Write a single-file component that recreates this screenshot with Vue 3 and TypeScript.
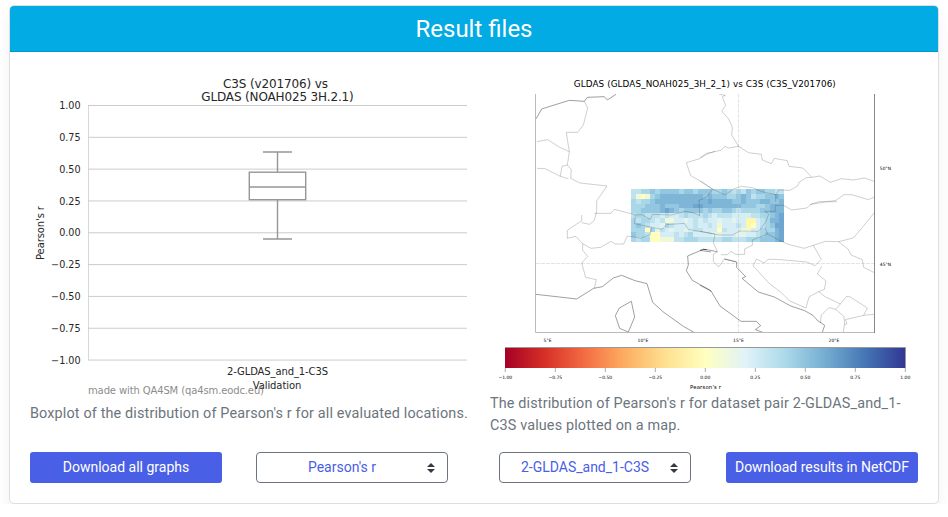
<script setup lang="ts">
const yTicks = ['1.00', '0.75', '0.50', '0.25', '0.00', '−0.25', '−0.50', '−0.75', '−1.00'].map(
  (label, i) => ({ label, y: 105.5 + i * 31.82 })
)

const barTicks = ['−1.00', '−0.75', '−0.50', '−0.25', '0.00', '0.25', '0.50', '0.75', '1.00'].map(
  (label, i) => ({ label, x: 505.3 + i * 50 })
)

const lonTicks = [
  { label: '5°E', x: 547.5 },
  { label: '10°E', x: 643 },
  { label: '15°E', x: 738.5 },
  { label: '20°E', x: 834 }
]

const stops = ['#a50026', '#d73027', '#f46d43', '#fdae61', '#fee090', '#ffffbf', '#e0f3f8', '#abd9e9', '#74add1', '#4575b4', '#313695']

const palette: Record<string, string> = {
  a: '#6ea6cf', b: '#7fb6d7', c: '#93c6e0', d: '#a9d7e8', e: '#c0e2ee',
  f: '#d5edf4', g: '#e3f3ee', h: '#f0f8d8', y: '#ffffbf', z: '#fff7a8'
}

const rows = [
  'eeddcdccccdccdcccddcdedecdccddee',
  'ehyhdcbbbbbbbbbcbcccddcbceddccbc',
  'deddcbbbbbbbbbbbabbbbccbcccbbccb',
  'dddcccbcccbbbaabbbbbbbbcccddcbbb',
  'ddccccbabcdccccdcddccdeddddccbbb',
  'eddeeefeffedeeedefeeeffffeeddcba',
  'deddefehhffgfefeffgffgffzzfedbba',
  'dcdeffgdeffffeffefhfffefzyfedcaa',
  'dddydgefgffgfeefffyefffhhffdddba',
  'cddeyyfffefedffffggfffggffedccba',
  'deddyyhhheedddeeeeeddeeedddcccba'
]
const cell = 4.79
const cells = rows.flatMap((row, j) =>
  [...row].map((k, i) => ({ x: 631 + i * cell, y: 189.2 + j * cell, fill: palette[k] }))
)
</script>

<template>
  <section class="card">
    <header class="card-header">Result files</header>
    <div class="card-body">
      <div class="figures">
        <figure class="fig-left">
          <svg width="440" height="327" viewBox="30 72 440 327" class="plot">
            <g fill="#262626" font-size="12" text-anchor="middle">
              <text x="275.5" y="88" textLength="105">C3S (v201706) vs</text>
              <text x="277.5" y="100.5" textLength="152.500">GLDAS (NOAH025 3H.2.1)</text>
            </g>
            <path d="M88.500 105v255" stroke="#d8d8d8" />
            <g v-for="t in yTicks" :key="t.label">
              <path :d="`M88 ${t.y}H467`" stroke="#ccc" />
              <text x="80.500" :y="t.y + 3.7" text-anchor="end" font-size="9.600" fill="#262626">{{ t.label }}</text>
            </g>
            <g fill="none" stroke="#969696" stroke-width="1.400">
              <path d="M277.500 172V152M277.500 199.500V239M263 152H292M263 239H292M249.300 187H305.700" />
              <rect x="249.300" y="172.200" width="56.400" height="27.500" />
            </g>
            <text transform="translate(44 233) rotate(-90)" text-anchor="middle" font-size="10" textLength="54" fill="#262626">Pearson's r</text>
            <text x="88" y="393.500" font-size="10" textLength="176" fill="#8c8c8c">made with QA4SM (qa4sm.eodc.eu)</text>
            <g font-size="10" text-anchor="middle" fill="#262626">
              <text x="277.500" y="374.500" textLength="101">2-GLDAS_and_1-C3S</text>
              <text x="277" y="388.700" textLength="48.500">Validation</text>
            </g>
          </svg>
          <figcaption>Boxplot of the distribution of Pearson's r for all evaluated locations.</figcaption>
        </figure>
        <figure class="fig-right">
          <svg width="428" height="320" viewBox="490 72 428 320" class="plot">
            <defs>
              <linearGradient id="scale">
                <stop v-for="(c, i) in stops" :key="c" :offset="i / 10" :stop-color="c" />
              </linearGradient>
            </defs>
            <text x="704.800" y="87.300" font-size="8.800" text-anchor="middle" textLength="262">GLDAS (GLDAS_NOAH025_3H_2_1) vs C3S (C3S_V201706)</text>
            <g shape-rendering="crispEdges">
              <rect v-for="(c, i) in cells" :key="i" :x="c.x" :y="c.y" width="4.790" height="4.790" :fill="c.fill" />
            </g>
            <path d="M536 263.500H874M738.500 94V332" stroke="#bbb" stroke-opacity=".4" stroke-dasharray="4 1" fill="none" />
            <g class="border">
              <g transform="translate(525 75) scale(.33333)">
                <path d="M178 79L188 99L175 150L158 172H124L130 212L133 230L127 270L139 284L137 310L165 324L246 333L215 378V410L208 436L194 448L170 443M36 200L68 194L104 217L133 230M36 280L60 281L106 304L130 311M127 270L111 274L106 304" />
                <path d="M570 229L544 238L524 251L484 263L497 302L531 321L563 343L543 368L522 376" />
              </g>
              <g transform="translate(700 75) scale(.33333)">
                <path d="M58 58L76 61L67 65L77 91L65 108L86 132L97 157L95 180L116 214L86 219L75 214L62 226L20 235L0 248M116 214L145 233L184 238L187 255L214 266L223 250L262 257L267 274L308 279L336 307L360 303L391 322L424 311L460 315L493 309L523 319M336 307L319 308L298 321L293 333L270 346L235 345M330 389L356 380L390 379L408 376L432 359L455 359L505 374L523 366M0 318L37 342L75 360L100 342L125 334L157 338L190 351L228 359L236 345M228 359L227 380" />
              </g>
              <g transform="translate(525 200) scale(.33333)">
                <path d="M170 45V62L127 91V115L152 109L173 131L198 145L227 142L258 124L270 132H296L307 108L348 115L376 103L380 82L358 77L328 71L331 45L350 44L376 58L383 43L440 45L480 34L507 39L524 47L522 0M208 40H258L268 28L318 41L331 45M380 82L410 88L425 74L478 70L490 88L570 102M173 131V151L188 169L170 189L182 232L214 239L208 265" />
              </g>
              <g transform="translate(700 200) scale(.33333)">
                <path d="M0 94L58 105L96 105L121 93L176 94L198 65L206 42L194 34H226V16L250 16L275 30L321 24L333 13L384 5H411M195 83L203 102L240 122L265 133L312 145L340 136L376 124L416 125L460 114L484 86L523 38M203 102L157 120V136L134 147V163H107L93 154L82 164H63M45 103L40 128L53 156L40 163V184L56 201L73 177L108 185M340 136L364 178L345 197L320 186L230 178L204 178L192 189L170 177L159 197L205 248L244 278L269 303L318 324L327 291L356 275L373 268L378 243L352 222L365 199M416 125L445 148L453 165L487 179L491 202L523 218M356 275L375 290L421 312L440 289L451 291L502 324L491 346L436 359L441 371L433 375L430 397M523 343L491 346M421 312L407 328L387 323L364 345L361 369M407 328L432 350L434 375" />
              </g>
            </g>
            <g class="coast">
              <path transform="translate(525 75) scale(.33333)" d="M33 132L50 102L75 94L133 76L178 79L187 67L238 65L247 75L273 58" />
              <path transform="translate(525 200) scale(.33333)" d="M33 283L155 297L206 265L232 260L265 234L290 226L330 242L366 251L383 307L415 336L475 379L507 397M319 304L329 351L310 396L284 385L271 347L283 324ZM545 149L535 148L488 168L490 195L484 212L502 241L556 271L558 275" />
              <path transform="translate(700 200) scale(.33333)" d="M20 149L51 155M10 148L20 149M33 273L60 318L123 364H169L182 377L166 389L188 397M73 177L110 186V202L137 230L126 235L175 276L223 291L272 318L314 332L339 346L353 362L374 376L367 397M20 149L10 148L0 151L33 156M33 273L0 256" />
            </g>
            <path d="M535.500 94V332.500H874.500" stroke="#bbb" fill="none" />
            <path d="M874.500 94V333" stroke="#888" />
            <g class="tiny">
              <text v-for="t in lonTicks" :key="t.label" :x="t.x" y="342">{{ t.label }}</text>
              <text x="885.500" y="170">50°N</text>
              <text x="885.500" y="266">45°N</text>
            </g>
            <rect x="505" y="347.500" width="400.500" height="20.500" fill="url(#scale)" />
            <path d="M505 347.500H905.500V368" stroke="#999" fill="none" />
            <g class="tiny">
              <g v-for="t in barTicks" :key="t.label">
                <path :d="`M${t.x} 368v4`" stroke="#aaa" />
                <text :x="t.x" y="379">{{ t.label }}</text>
              </g>
              <text class="bar-label" x="705.500" y="389" textLength="31">Pearson's r</text>
            </g>
          </svg>
          <figcaption>The distribution of Pearson's r for dataset pair 2-GLDAS_and_1-<wbr />C3S values plotted on a map.</figcaption>
        </figure>
      </div>
      <div class="actions">
        <div class="pair">
          <button class="btn">Download all graphs</button>
          <div class="select">
            <span>Pearson's r</span>
            <svg width="8" height="10" viewBox="0 0 4 5"><path fill="#343a40" d="M2 0L0 2h4zm0 5L0 3h4z" /></svg>
          </div>
        </div>
        <div class="pair">
          <div class="select">
            <span>2-GLDAS_and_1-C3S</span>
            <svg width="8" height="10" viewBox="0 0 4 5"><path fill="#343a40" d="M2 0L0 2h4zm0 5L0 3h4z" /></svg>
          </div>
          <button class="btn">Download results in NetCDF</button>
        </div>
      </div>
    </div>
  </section>
</template>

<style>
body {
  background: #fff;
  overflow: hidden;
}
</style>

<style scoped>
.card {
  box-sizing: border-box;
  width: 930px;
  height: 499px;
  margin: 5px 0 0 9px;
  border: 1px solid #dfdfdf;
  border-radius: 5px;
  background: #fff;
  box-shadow: 0 8px 16px rgba(0, 0, 0, 0.06);
  font-family: Roboto, sans-serif;
}
.card-header {
  box-sizing: border-box;
  height: 46px;
  border-bottom: 1px solid #0297cb;
  border-radius: 4px 4px 0 0;
  background: #02abe4;
  color: #fff;
  font-size: 24px;
  line-height: 46px;
  text-align: center;
}
.card-body {
  padding: 20px;
}
.figures {
  display: flex;
  justify-content: space-between;
  height: 380px;
}
figure {
  margin: 0;
}
.fig-left {
  width: 440px;
}
.fig-right {
  width: 428px;
}
.plot {
  display: block;
  font-family: 'DejaVu Sans', sans-serif;
}
figcaption {
  margin-top: 4px;
  color: #6c757d;
  font-size: 14.4px;
  line-height: 22px;
  letter-spacing: 0.147px;
}
.fig-right figcaption {
  margin-top: 1px;
}
.border path,
.coast path {
  fill: none;
  stroke: #333;
  stroke-width: 1.7;
  stroke-opacity: 0.42;
}
.coast path {
  stroke: #222;
  stroke-width: 2;
  stroke-opacity: 0.65;
}
.tiny {
  font-size: 4.5px;
  text-anchor: middle;
  fill: #000;
}
.bar-label {
  font-size: 5.4px;
}
.actions {
  display: grid;
  grid-template-columns: 418px 419px;
  justify-content: space-between;
}
.pair {
  display: flex;
  justify-content: space-between;
}
.btn,
.select {
  box-sizing: border-box;
  width: 192px;
  height: 31px;
  border-radius: 3px;
  font-family: inherit;
  font-size: 14px;
  line-height: 29px;
  text-align: center;
  white-space: nowrap;
}
.btn {
  padding: 0;
  border: 0;
  background: #4960e6;
  color: #fff;
}
.select {
  display: flex;
  align-items: center;
  padding: 0 12px 0 0;
  border: 1px solid #6c757d;
  border-radius: 4px;
  color: #4960e6;
}
.select span {
  flex: 1;
}
</style>
